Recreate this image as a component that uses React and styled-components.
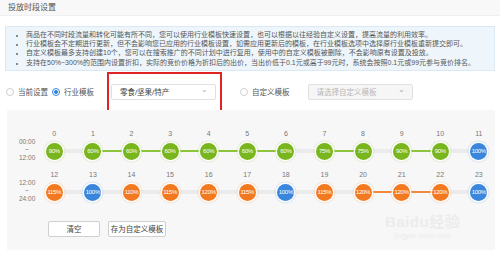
import React from "react";
import styled, { createGlobalStyle } from "styled-components";

const GlobalStyle = createGlobalStyle`
    html, body {
        margin: 0;
        padding: 0;
        background: #fff;
    }
    body {
        width: 500px;
        height: 257px;
        overflow: hidden;
        font-family: "Liberation Sans", "Noto Sans CJK SC", sans-serif;
        color: #333;
    }
`

const COLORS = {
    green: '#79b51c',
    orange: '#f2791f',
    blue: '#3a86dc',
}

const LINKS = {
    green: '#8cc43c',
    orange: '#f08a3e',
    none: '#ebebeb',
}

const tips = [
    '商品在不同时段流量和转化可能有所不同，您可以使用行业模板快速设置，也可以根据以往经验自定义设置，提高流量的利用效率。',
    '行业模板会不定期进行更新，但不会影响您已应用的行业模板设置，如需应用更新后的模板，在行业模板选项中选择原行业模板重新提交即可。',
    '自定义模板最多支持创建10个，您可以在搜索推广的不同计划中进行复用，使用中的自定义模板被删除，不会影响原有设置及投放。',
    '支持在50%~300%的范围内设置折扣，实际的竞价价格为折扣后的出价，当出价低于0.1元或高于99元时，系统会按照0.1元或99元参与竞价排名。',
]

const row1 = [90, 60, 60, 60, 60, 60, 60, 75, 75, 90, 90, 100]
const row2 = [115, 100, 110, 115, 120, 115, 100, 115, 120, 120, 120, 100]

const colorOf = (v) => (v === 100 ? 'blue' : v > 100 ? 'orange' : 'green')

const App = () => {

    const renderRow = (values, start, from, to) => (
        <HourRow>
            <TimeLabel>
                <div>{from}</div>
                <div>~</div>
                <div>{to}</div>
            </TimeLabel>
            {values.map((v, i) => {
                const next = values[i + 1]
                const link = next === undefined ? null : next === v ? colorOf(v) : 'none'
                return (
                    <HourCell key={i} $link={link}>
                        <HourNum>{start + i}</HourNum>
                        <Dot $color={colorOf(v)}>{v}%</Dot>
                    </HourCell>
                )
            })}
        </HourRow>
    )

    return (
        <>
            <GlobalStyle />
            <Page>
                <TitleBar>投放时段设置</TitleBar>
                <TipBox>
                    {tips.map((t, i) => <TipLine key={i}>{t}</TipLine>)}
                </TipBox>
                <RadioRow>
                    <RadioItem><Radio />当前设置</RadioItem>
                    <RadioItem $gap={13}><Radio $checked />行业模板</RadioItem>
                    <SelectWrap>
                        <Select>零食/坚果/特产<Chevron>⌄</Chevron></Select>
                        <Highlight />
                    </SelectWrap>
                    <RadioItem $gap={18}><Radio />自定义模板</RadioItem>
                    <Select $disabled>请选择自定义模板<Chevron>⌄</Chevron></Select>
                </RadioRow>
                <Panel>
                    {renderRow(row1, 0, '00:00', '12:00')}
                    {renderRow(row2, 12, '12:00', '24:00')}
                    <ButtonRow>
                        <Button $width={52}>清空</Button>
                        <Button $width={58}>存为自定义模板</Button>
                    </ButtonRow>
                    <Watermark>
                        <span>Bai<b>du</b>经验</span>
                        <small>jingyan.baidu.com</small>
                    </Watermark>
                </Panel>
            </Page>
        </>
    )
};

const Page = styled.div`
    display: flex;
    flex-direction: column;
    width: 500px;
    height: 257px;
`

const TitleBar = styled.div`
    height: 16px;
    padding: 2px 8px 0;
    box-sizing: border-box;

    font-size: 8px;
    line-height: 12px;
    color: #555;

    background: #f8f8f8;
    border-bottom: 1px solid #f0f0f0;
`

const TipBox = styled.ul`
    margin: 10px 5px 0;
    padding: 3px 0 3px 20px;

    font-size: 7px;
    line-height: 9.2px;
    color: #555;

    background: #eef6fc;
    border: 1px solid #dbe9f5;
`

const TipLine = styled.li`
    white-space: nowrap;

    &::marker{
        font-size: 6px;
        color: #666;
    }
`

const RadioRow = styled.div`
    display: flex;
    align-items: center;

    margin-top: 13px;
    padding-left: 6px;
    height: 16px;
`

const RadioItem = styled.label`
    display: flex;
    align-items: center;
    gap: 4px;

    margin-right: ${props => props.$gap ?? 4}px;

    font-size: 7.5px;
    color: #555;
    white-space: nowrap;
`

const Radio = styled.span`
    width: 8px;
    height: 8px;
    box-sizing: border-box;

    border-radius: 50%;
    border: 1px solid ${props => props.$checked ? '#3a86dc' : '#cfcfcf'};
    background: ${props => props.$checked
        ? 'radial-gradient(circle, #3a86dc 0 1.8px, #fff 2.2px)'
        : '#fff'};
`

const SelectWrap = styled.div`
    position: relative;
    display: flex;
    margin-left: 4px;
    margin-right: 24px;
`

const Select = styled.div`
    display: flex;
    align-items: center;
    justify-content: space-between;

    width: 105px;
    height: 16px;
    padding: 0 7px 0 8px;
    box-sizing: border-box;

    font-size: 7.5px;
    color: ${props => props.$disabled ? '#b8b8b8' : '#444'};

    background: ${props => props.$disabled ? '#f6f6f6' : '#fff'};
    border: 1px solid #e0e0e0;
    border-radius: 2px;
`

const Chevron = styled.span`
    margin-top: -5px;
    font-size: 8px;
    color: #aaa;
`

const Highlight = styled.div`
    position: absolute;
    top: -12px;
    bottom: -13px;
    left: -4px;
    right: -6px;

    border: 2px solid #e02424;
    pointer-events: none;
`

const Panel = styled.div`
    position: relative;
    display: flex;
    flex-direction: column;

    margin: 10px 5px 0 7px;
    padding: 10px 0 0;
    height: 140px;
    box-sizing: border-box;

    background: #f7f7f7;
`

const HourRow = styled.div`
    display: grid;
    grid-template-columns: 28px repeat(12, 38.6px);
    align-items: end;
    height: 41px;
`

const TimeLabel = styled.div`
    align-self: end;
    padding: 0 0 0 12px;
    margin-bottom: -1px;

    font-size: 6.5px;
    line-height: 8px;
    color: #777;
    text-align: center;
`

const HourCell = styled.div`
    position: relative;
    display: flex;
    flex-direction: column;
    align-items: center;
    gap: 5px;

    &::after{
        content: '';
        display: ${props => props.$link ? 'block' : 'none'};
        position: absolute;
        left: 50%;
        width: 100%;
        bottom: ${props => props.$link === 'none' ? 8 : 9}px;
        height: ${props => props.$link === 'none' ? 4 : 2}px;
        background: ${props => LINKS[props.$link] ?? 'transparent'};
    }
`

const HourNum = styled.div`
    font-size: 7px;
    line-height: 8px;
    color: #777;
`

const Dot = styled.div`
    position: relative;
    z-index: 1;
    display: flex;
    align-items: center;
    justify-content: center;

    width: 17px;
    height: 17px;
    margin-bottom: 1px;

    font-size: 6px;
    letter-spacing: -0.3px;
    color: #fff;

    border-radius: 50%;
    background: ${props => COLORS[props.$color]};
    box-shadow: 0 0 0 1.5px rgba(255, 255, 255, 0.85), 0 0 0 2.5px ${props => COLORS[props.$color]}22;
`

const ButtonRow = styled.div`
    display: flex;
    gap: 8px;
    margin: 19px 0 0 41px;
`

const Button = styled.button`
    width: ${props => props.$width}px;
    height: 16px;
    padding: 0;

    font-family: inherit;
    font-size: 7.5px;
    color: #444;

    background: #fff;
    border: 1px solid #cfcfcf;
    border-radius: 2px;
`

const Watermark = styled.div`
    position: absolute;
    left: 378px;
    top: 100px;
    display: flex;
    flex-direction: column;
    align-items: center;

    color: #ececec;
    pointer-events: none;

    span{
        font-size: 15px;
        font-weight: 700;
        letter-spacing: 0.5px;
    }

    b{
        font-size: 15px;
    }

    small{
        font-size: 7px;
        margin-top: 1px;
    }
`

export default App;
